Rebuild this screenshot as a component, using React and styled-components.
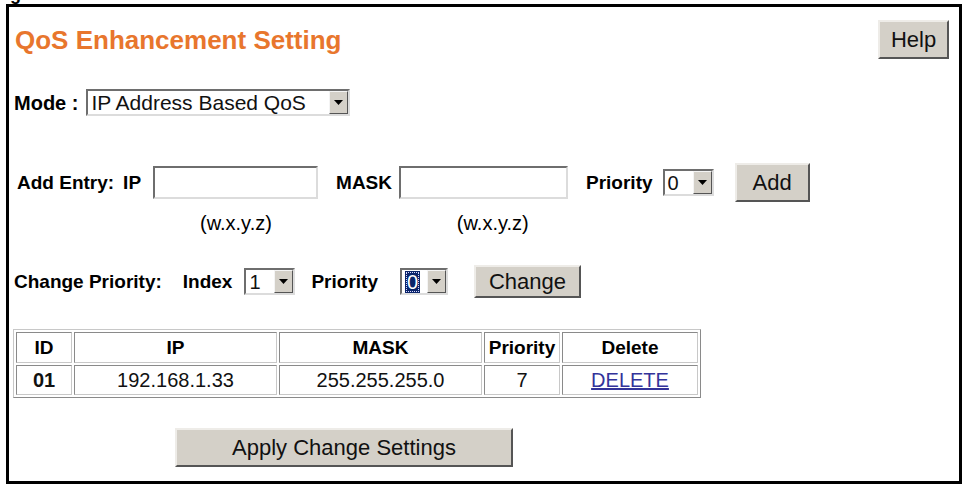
import React from "react";
import styled, { createGlobalStyle } from "styled-components";

const FONT = `"Liberation Sans", Arial, sans-serif`;

const Global = createGlobalStyle`
  html, body { margin: 0; padding: 0; background: #fff; }
  body { font-family: ${FONT}; color: #000; }
`;

const Caption = styled.div`
  height: 4px;
  overflow: hidden;
`;
const CaptionText = styled.div`
  margin-top: -15px;
  text-indent: -6px;
  font: bold 18px/18px ${FONT};
`;

const Frame = styled.div`
  box-sizing: border-box;
  width: 956px;
  height: 480px;
  margin-left: 6px;
  border: 3px solid #000;
  display: flex;
  flex-direction: column;
  align-items: flex-start;
`;

const Header = styled.div`
  align-self: stretch;
  display: flex;
  justify-content: space-between;
  align-items: center;
  padding: 13px 10px 0 6px;
`;

const Title = styled.h1`
  margin: 0;
  font: bold 26px/1 ${FONT};
  color: #e8762d;
`;

const Row = styled.div`
  display: flex;
  align-items: center;
  margin-top: ${(p) => p.$mt || 0}px;
  padding-left: ${(p) => p.$pl || 0}px;
`;

const Label = styled.span`
  font: bold ${(p) => p.$size || 19}px/1 ${FONT};
  margin-left: ${(p) => p.$ml || 0}px;
  white-space: nowrap;
`;

const Hint = styled.span`
  font: 20px/20px ${FONT};
  margin-left: ${(p) => p.$ml || 0}px;
`;

const Button = styled.button`
  box-sizing: border-box;
  width: ${(p) => p.$w}px;
  height: ${(p) => p.$h}px;
  margin-left: ${(p) => p.$ml || 0}px;
  padding: 0;
  background: #d4d0c8;
  border: 2px solid;
  border-color: #eeece8 #555 #555 #eeece8;
  font: 22px/1 ${FONT};
  color: #111;
`;

const TextInput = styled.div`
  box-sizing: border-box;
  width: ${(p) => p.$w}px;
  height: 33px;
  margin-left: ${(p) => p.$ml || 0}px;
  background: #fff;
  border: 2px solid;
  border-color: #6e6e6e #dcdcdc #dcdcdc #6e6e6e;
`;

const Select = styled.div`
  box-sizing: border-box;
  display: flex;
  align-items: stretch;
  width: ${(p) => p.$w}px;
  height: 27px;
  margin-left: ${(p) => p.$ml || 0}px;
  background: #fff;
  border: 2px solid;
  border-color: #6e6e6e #dcdcdc #dcdcdc #6e6e6e;
`;

const SelectValue = styled.span`
  flex: 1;
  display: flex;
  align-items: center;
  padding-left: 3px;
  font: ${(p) => p.$size || 21}px/1 ${FONT};
  color: #111;
  overflow: hidden;
  white-space: nowrap;
`;

const Highlight = styled.span`
  display: inline-block;
  padding: 1px 2px;
  background: #0a246a;
  color: #fff;
  outline: 1px dotted #d8d8ff;
  outline-offset: -2px;
`;

const Arrow = styled.span`
  box-sizing: border-box;
  width: 19px;
  display: flex;
  align-items: center;
  justify-content: center;
  background: #d4d0c8;
  border: 1px solid;
  border-color: #f4f4f4 #555 #555 #f4f4f4;
`;

const ArrowIcon = () => (
  <svg width="9" height="5" viewBox="0 0 9 5">
    <path d="M0 0h9L4.5 5z" fill="#000" />
  </svg>
);

const Table = styled.table`
  margin-top: 31px;
  margin-left: 4px;
  border-collapse: separate;
  border-spacing: 2px;
  border: 1px solid;
  border-color: #c8c8c8 #8a8a8a #8a8a8a #c8c8c8;
  table-layout: fixed;
`;

const Th = styled.th`
  height: 29px;
  padding: 0;
  border: 1px solid;
  border-color: #8a8a8a #c8c8c8 #c8c8c8 #8a8a8a;
  font: bold 19px/1 ${FONT};
  text-align: center;
  white-space: nowrap;
`;

const Td = styled.td`
  height: 28px;
  padding: 0;
  border: 1px solid;
  border-color: #8a8a8a #c8c8c8 #c8c8c8 #8a8a8a;
  font: ${(p) => (p.$bold ? "bold" : "normal")} 20px/1 ${FONT};
  text-align: center;
  color: #111;
`;

const DeleteLink = styled.a`
  color: #33339a;
  text-decoration: underline;
  cursor: pointer;
`;

const ApplyRow = styled.div`
  margin-top: 30px;
  padding-left: 166px;
`;

const columns = [56, 203, 203, 76, 136];

export default function App() {
  return (
    <>
      <Global />
      <Caption>
        <CaptionText>Figure</CaptionText>
      </Caption>
      <Frame>
        <Header>
          <Title>QoS Enhancement Setting</Title>
          <Button $w={71} $h={39}>Help</Button>
        </Header>

        <Row $mt={30} $pl={5}>
          <Label $size={20}>Mode :</Label>
          <Select $w={264} $ml={8}>
            <SelectValue $size={21}>IP Address Based QoS</SelectValue>
            <Arrow>
              <ArrowIcon />
            </Arrow>
          </Select>
        </Row>

        <Row $mt={47} $pl={8}>
          <Label>Add Entry:</Label>
          <Label $ml={9}>IP</Label>
          <TextInput $w={165} $ml={12} />
          <Label $ml={18}>MASK</Label>
          <TextInput $w={169} $ml={7} />
          <Label $ml={18}>Priority</Label>
          <Select $w={51} $ml={10}>
            <SelectValue $size={20}>0</SelectValue>
            <Arrow>
              <ArrowIcon />
            </Arrow>
          </Select>
          <Button $w={75} $h={39} $ml={21}>Add</Button>
        </Row>

        <Row $mt={11} $pl={191}>
          <Hint>(w.x.y.z)</Hint>
          <Hint $ml={185}>(w.x.y.z)</Hint>
        </Row>

        <Row $mt={32} $pl={5}>
          <Label>Change Priority:</Label>
          <Label $ml={21}>Index</Label>
          <Select $w={51} $ml={12}>
            <SelectValue $size={20}>1</SelectValue>
            <Arrow>
              <ArrowIcon />
            </Arrow>
          </Select>
          <Label $ml={16}>Priority</Label>
          <Select $w={48} $ml={22}>
            <SelectValue $size={20}>
              <Highlight>0</Highlight>
            </SelectValue>
            <Arrow>
              <ArrowIcon />
            </Arrow>
          </Select>
          <Button $w={107} $h={33} $ml={26}>Change</Button>
        </Row>

        <Table>
          <colgroup>
            {columns.map((w, i) => (
              <col key={i} style={{ width: w }} />
            ))}
          </colgroup>
          <thead>
            <tr>
              <Th>ID</Th>
              <Th>IP</Th>
              <Th>MASK</Th>
              <Th>Priority</Th>
              <Th>Delete</Th>
            </tr>
          </thead>
          <tbody>
            <tr>
              <Td $bold>01</Td>
              <Td>192.168.1.33</Td>
              <Td>255.255.255.0</Td>
              <Td>7</Td>
              <Td>
                <DeleteLink>DELETE</DeleteLink>
              </Td>
            </tr>
          </tbody>
        </Table>

        <ApplyRow>
          <Button $w={338} $h={39}>Apply Change Settings</Button>
        </ApplyRow>
      </Frame>
    </>
  );
}
